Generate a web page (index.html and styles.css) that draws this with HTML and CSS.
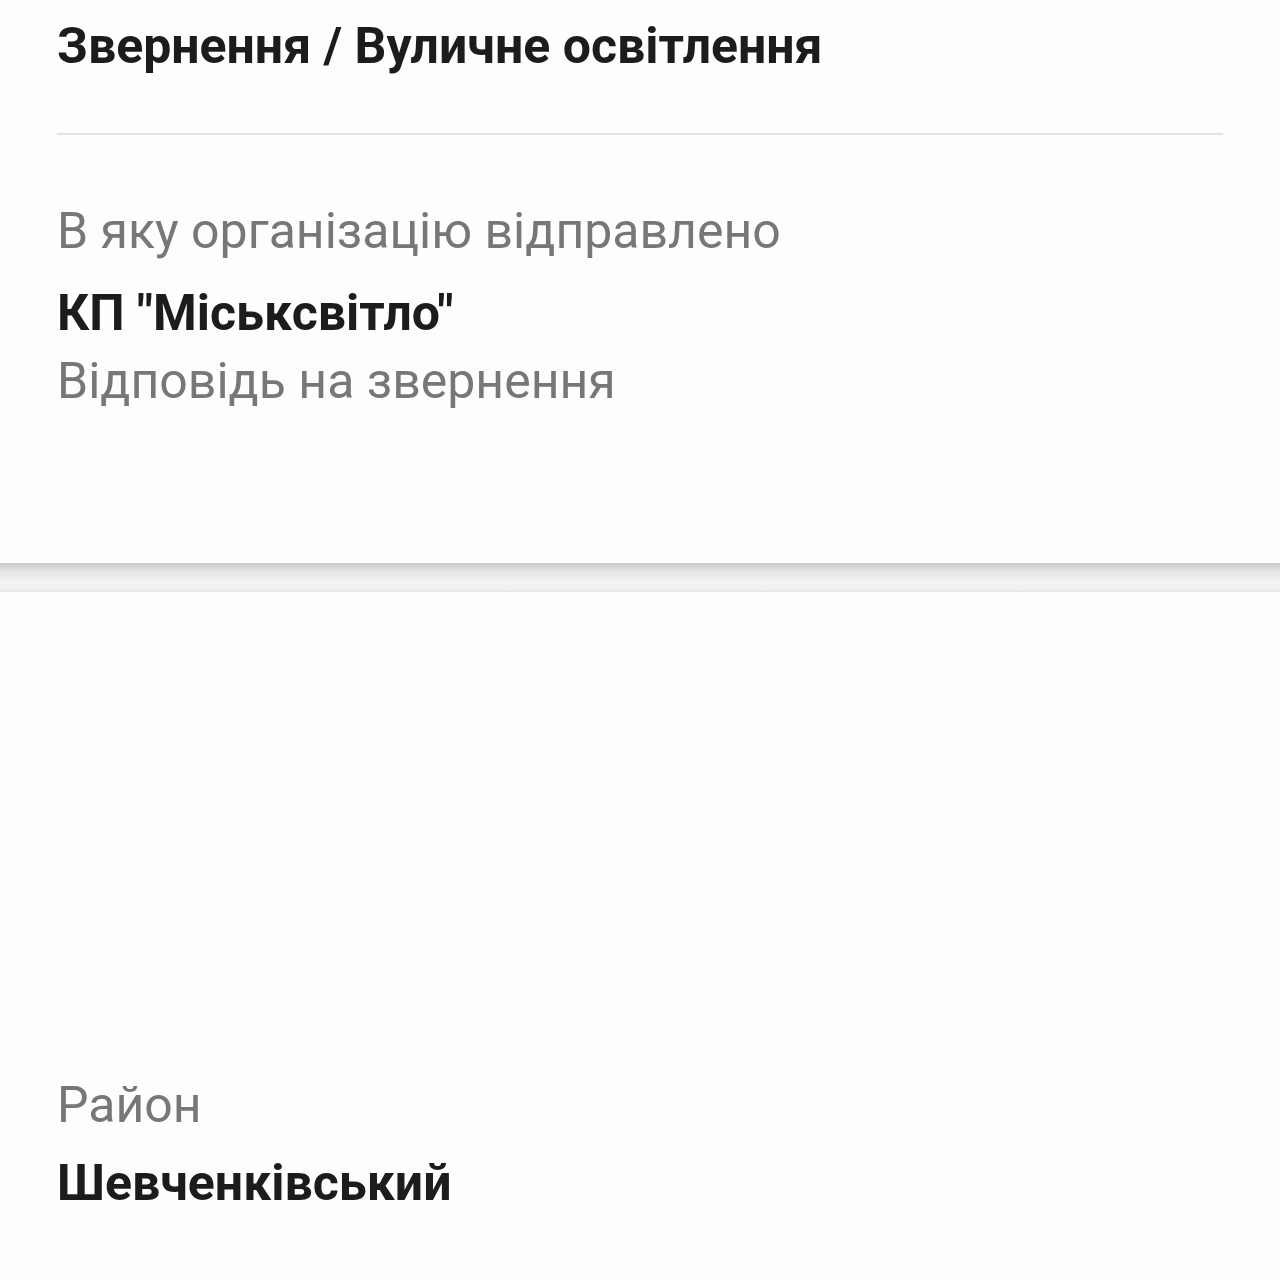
FILE: index.html
```html
<!DOCTYPE html>
<html lang="uk">
<head>
<meta charset="utf-8">
<link rel="stylesheet" href="styles.css">
</head>
<body>
<div class="page">
  <section class="card card-top">
    <h1 class="title">Звернення / Вуличне освітлення</h1>
    <hr class="divider">
    <div class="label first">В яку організацію відправлено</div>
    <div class="value">КП "Міськсвітло"</div>
    <div class="label sub">Відповідь на звернення</div>
  </section>
  <div class="gap"></div>
  <section class="card card-bottom">
    <div class="label">Район</div>
    <div class="value value-district">Шевченківський</div>
  </section>
</div>
</body>
</html>
```
FILE: styles.css
```css
html, body {
  margin: 0;
  padding: 0;
  background: #fdfdfd;
}
body {
  font-family: Roboto, "Noto Sans", "DejaVu Sans", sans-serif;
  width: 1280px;
  height: 1280px;
  overflow: hidden;
}
.page {
  display: flex;
  flex-direction: column;
}
.card {
  background: #fdfdfd;
  padding: 0 57px 0 57px;
  display: flex;
  flex-direction: column;
}
.card-top {
  height: 563px;
  box-sizing: border-box;
  padding-top: 16px;
}
.title {
  margin: 0;
  font-size: 50px;
  font-weight: 700;
  color: #1c1c1c;
  line-height: 60px;
}
.divider {
  border: 0;
  height: 2px;
  background: #e2e2e2;
  margin: 57px 0 0 0;
  width: 1166px;
}
.label {
  font-size: 50px;
  color: #777777;
  line-height: 60px;
}
.label.first {
  margin-top: 66px;
}
.value {
  font-size: 50px;
  font-weight: 700;
  color: #1c1c1c;
  line-height: 60px;
  margin-top: 22px;
}
.label.sub {
  margin-top: 8px;
}
.value-district {
  margin-top: 18px;
}
.gap {
  height: 29px;
  background: linear-gradient(to bottom, #c9c9c9 0%, #e6e6e6 30%, #f3f3f3 65%, #f1f1f1 90%, #e6e6e6 100%);
}
.card-bottom {
  padding-top: 483px;
}
```
